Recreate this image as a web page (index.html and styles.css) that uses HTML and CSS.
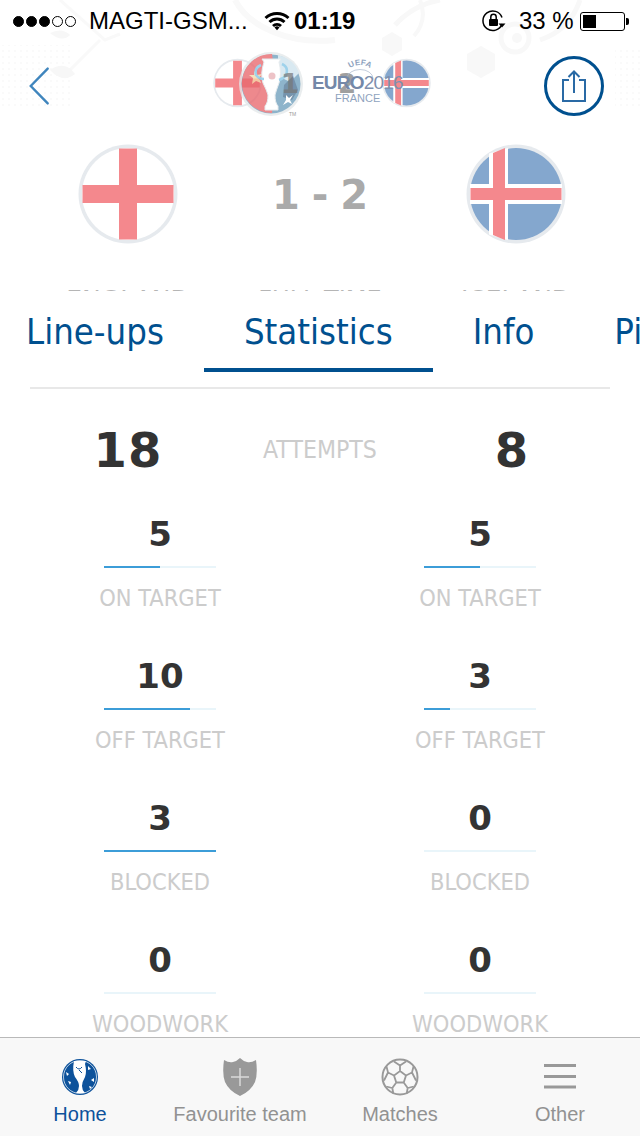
FILE: index.html
```html
<!DOCTYPE html>
<html lang="en">
<head>
<meta charset="utf-8">
<title>England - Iceland statistics</title>
<link rel="stylesheet" href="styles.css">
</head>
<body>
<div class="app">
  <svg class="backdrop" width="640" height="135" viewBox="0 0 640 135" aria-hidden="true">
    <defs><pattern id="dots" width="6" height="6" patternUnits="userSpaceOnUse"><circle cx="3" cy="3" r="1.1" fill="#f9f9f9"/></pattern></defs>
    <rect x="0" y="45" width="70" height="65" fill="url(#dots)"/>
    <rect x="615" y="50" width="25" height="60" fill="url(#dots)"/>
    <path d="M235 0a90 60 0 0 0 100 40" fill="none" stroke="#f9f9f9" stroke-width="6"/>
    <path d="M420 0q8 20 -6 36" fill="none" stroke="#f8f8f8" stroke-width="4"/>
    <path d="M60 0l45 40 15 -6M100 40l-30 30" fill="none" stroke="#f9f9f9" stroke-width="3"/>
    <path d="M50 33q12 -6 20 2q-8 8 -20 -2zM50 70q15 -10 25 4q-12 10 -25 -4z" fill="#f7f7f7"/>
    <path d="M392 32l10 6v12l-10 6l-10 -6v-12zM481 46l14 8v16l-14 8l-14 -8v-16z" fill="#f8f8f8"/>
    <circle cx="515" cy="38" r="14" fill="none" stroke="#f8f8f8" stroke-width="5"/>
    <circle cx="517" cy="38" r="5" fill="#f8f8f8"/>
    <path d="M440 0a80 80 0 0 0 -45 25M580 0q-10 30 -40 40" fill="none" stroke="#f8f8f8" stroke-width="5"/>
  </svg>

  <div class="status">
    <span class="signal"><i class="dot"></i><i class="dot"></i><i class="dot"></i><i class="dot off"></i><i class="dot off"></i></span>
    <span class="carrier">MAGTI-GSM...</span>
    <svg class="wifi" width="26" height="20" viewBox="0 0 26 20"><path d="M1.500 7a17 17 0 0 1 23 0M5.500 11a11 11 0 0 1 15 0M9 15a6 6 0 0 1 8 0" fill="none" stroke="#000" stroke-width="3"/><path d="M10.500 16.500l2.500 2.800l2.500-2.800a3.600 3.600 0 0 0-5 0z"/></svg>
    <span class="clock">01:19</span>
    <svg class="lock" width="24" height="24" viewBox="0 0 24 24"><path d="M20 15a9.800 9.800 0 1 1 0-6.500" fill="none" stroke="#000" stroke-width="1.500"/><path d="M16.500 14.500h7l-3.500 4z"/><rect x="7" y="10" width="9" height="7" rx="1"/><path d="M8.800 10V8a2.700 2.700 0 0 1 5.400 0v2" fill="none" stroke="#000" stroke-width="1.500"/></svg>
    <span class="percent">33 %</span>
    <span class="battery"><span class="battery-fill"></span></span>
    <span class="battery-tip"></span>
  </div>

  <header class="topbar">
    <svg class="back" width="22" height="40" viewBox="0 0 24 42"><path d="M21.500 2L3 21l18.500 19" fill="none" stroke="#3f85bd" stroke-width="2.600" stroke-linecap="round"/></svg>
    <div class="crest">
      <svg class="crest-flag crest-flag-en" width="49" height="50" viewBox="0 0 100 100"><use href="#flag-en"/></svg>
      <svg class="trophy" width="66" height="68" viewBox="0 0 66 68">
        <circle cx="33" cy="33" r="32" fill="#e4e8ea"/>
        <circle cx="33" cy="33" r="29.500" fill="#6f9fbd"/>
        <path d="M4 30a29.500 29.500 0 0 1 30-27l4 27l-4 32a29.500 29.500 0 0 1-30-32z" fill="#e8686e"/>
        <path d="M40 4q16 4 21 18l-9 9l-12-6z" fill="#cfe3ee"/>
        <path d="M46 34l9-9l5 14l-6 10l-9-3z" fill="#4f7696"/>
        <path d="M16 20l3 4l5-1l-3 4l2 5l-5-2l-4 3l1-6l-4-3h5z" fill="#f4d9a8"/>
        <path d="M24 8h19l-2 3q3 12 0 21q-3 8-4 12q0 8 3 11v4H27v-4q3-3 3-11q-1-4-5-12q-3-9 1-21z" fill="#fff" stroke="#dfe6ea"/>
        <path d="M23 14q-7 3-5 10q3 4 8 4M44 13q7 3 4 11q-3 4-7 5" fill="none" stroke="#83c6e6" stroke-width="2.500"/>
        <circle cx="34" cy="25" r="3.500" fill="#e9b3b8"/>
        <path d="M48 44l3 3l4-3l-3 5l2 4l-4-2l-5 3l3-5z" fill="#fff"/>
      </svg>
      <svg class="crest-flag crest-flag-is" width="49" height="50" viewBox="0 0 100 100"><use href="#flag-is"/></svg>
      <span class="crest-tm">TM</span>
      <span class="crest-num crest-num-home">1</span>
      <span class="crest-num crest-num-away">2</span>
      <svg class="uefa-arc" width="36" height="16" viewBox="0 0 36 16"><path id="uefa-curve" d="M3 15a15 13 0 0 1 30 0" fill="none"/><path d="M5 15.500a13 9 0 0 1 26 0" fill="none" stroke="#a9b8cd" stroke-width=".7"/><text class="uefa-text"><textPath href="#uefa-curve" startOffset="50%" text-anchor="middle">UEFA</textPath></text></svg>
      <div class="euro"><b>EURO</b>2016</div>
      <div class="france">FRANCE</div>
    </div>
    <button class="share" type="button" aria-label="Share">
      <svg width="26" height="34" viewBox="0 0 26 34"><path d="M8 11H2v21h22V11h-6M13 24V3M7.500 8L13 2.500L18.500 8" fill="none" stroke="#2a6aa5" stroke-width="2"/></svg>
    </button>
  </header>

  <section class="match">
    <div class="team">
      <svg class="flag" width="100" height="100" viewBox="0 0 100 100"><use href="#flag-en"/></svg>
      <span class="caption">ENGLAND</span>
    </div>
    <div class="result">
      <span class="score">1 - 2</span>
      <span class="caption">FULL TIME</span>
    </div>
    <div class="team team-away">
      <svg class="flag" width="100" height="100" viewBox="0 0 100 100"><use href="#flag-is"/></svg>
      <span class="caption">ICELAND</span>
    </div>
  </section>

  <nav class="tabs">
    <a class="tab">Line-ups</a>
    <a class="tab is-active">Statistics</a>
    <a class="tab">Info</a>
    <a class="tab">Pitch</a>
  </nav>
  <div class="rule"></div>

  <main class="stats">
    <div class="headline">
      <span class="big">18</span>
      <span class="label">ATTEMPTS</span>
      <span class="big">8</span>
    </div>
    <div class="grid">
      <div class="stat"><span class="num">5</span><div class="bar"><div class="fill" style="width:50%"></div></div><span class="label">ON TARGET</span></div>
      <div class="stat"><span class="num">5</span><div class="bar"><div class="fill" style="width:50%"></div></div><span class="label">ON TARGET</span></div>
      <div class="stat"><span class="num">10</span><div class="bar"><div class="fill" style="width:77%"></div></div><span class="label">OFF TARGET</span></div>
      <div class="stat"><span class="num">3</span><div class="bar"><div class="fill" style="width:23%"></div></div><span class="label">OFF TARGET</span></div>
      <div class="stat"><span class="num">3</span><div class="bar"><div class="fill" style="width:100%"></div></div><span class="label">BLOCKED</span></div>
      <div class="stat"><span class="num">0</span><div class="bar"></div><span class="label">BLOCKED</span></div>
      <div class="stat"><span class="num">0</span><div class="bar"></div><span class="label">WOODWORK</span></div>
      <div class="stat"><span class="num">0</span><div class="bar"></div><span class="label">WOODWORK</span></div>
    </div>
  </main>

  <footer class="tabbar">
    <a class="item is-current">
      <svg width="38" height="38" viewBox="0 0 38 38">
        <circle cx="19" cy="19" r="18" fill="#0d529b"/>
        <circle cx="19" cy="19" r="16.500" fill="none" stroke="#fff" stroke-width=".7"/>
        <path d="M13 3h12l-1 3q2 8 0 13q-3 5-3 9q0 4 3 7H15q3-3 3-7q0-4-4-9q-3-6-1-16z" fill="#fff"/>
        <path d="M15 9q3 4 6 0M21 15l-3-3" fill="none" stroke="#0d529b"/>
        <path d="M5 14l3 2l-2 2zM7 23l3 1l-1 3zM30 22l3-2v4zM28 28l3 1l-2 2zM27 8l3 3l-3 1z" fill="#fff"/>
      </svg>
      <span>Home</span>
    </a>
    <a class="item">
      <svg width="34" height="38" viewBox="0 0 34 38">
        <path d="M1 2q5 3 9 2q4-1 7-4q3 3 7 4q4 1 9-2q2 14-1 22q-4 9-15 14q-11-5-15-14q-3-8-1-22z" fill="#999"/>
        <path d="M17 10v18M8 19h18" stroke="#d9d9d9" stroke-width="1.500"/>
      </svg>
      <span>Favourite team</span>
    </a>
    <a class="item">
      <svg width="38" height="38" viewBox="0 0 38 38" fill="none" stroke="#999" stroke-width="1.800">
        <circle cx="19" cy="19" r="17.500" stroke-width="2"/>
        <path d="M19 13l6 4.500l-2.300 7h-7.400l-2.300-7zM19 13V7.500l-6-4M19 7.500l6-4M25 17.500l6-3l1.500-6M31 14.500l4 8M22.700 24.500l4 5.500l6-1.500M26.700 30l-1 5.500M15.300 24.500l-4 5.500l-6-1.500M11.300 30l1 5.500M13 17.500l-6-3l-1.500-6M7 14.500l-4 8"/>
      </svg>
      <span>Matches</span>
    </a>
    <a class="item">
      <svg width="34" height="38" viewBox="0 0 34 38"><path d="M1 7.500h32M1 18.500h32M1 29h32" stroke="#999" stroke-width="3"/></svg>
      <span>Other</span>
    </a>
  </footer>

  <svg class="defs" width="0" height="0" aria-hidden="true">
    <defs>
      <g id="flag-en">
        <circle cx="50" cy="50" r="49.500" fill="#e6eaee"/>
        <circle cx="50" cy="50" r="46" fill="#fff"/>
        <path d="M41 4.500h18V41h36.500v18H59v36.500H41V59H4.500V41H41z" fill="#f4888d"/>
      </g>
      <g id="flag-is">
        <circle cx="50" cy="50" r="49.500" fill="#e6eaee"/>
        <circle cx="50" cy="50" r="46" fill="#84a7ce"/>
        <path d="M23 9.500L42 4v92l-19-5.500zM4 40h92v20H4z" fill="#fff"/>
        <path d="M27 9l12-5v92l-12-5zM4.500 44h91v12h-91z" fill="#f4888d"/>
      </g>
    </defs>
  </svg>
</div>
</body>
</html>
```
FILE: styles.css
```css
* { box-sizing: border-box; }
html, body { margin: 0; padding: 0; background: #fff; }
body { font-family: "Liberation Sans", Arial, sans-serif; }
.app { position: relative; width: 640px; height: 1136px; overflow: hidden; display: flex; flex-direction: column; background: #fff; }
.backdrop { position: absolute; left: 0; top: 0; }
.defs { position: absolute; }

.status { position: relative; display: flex; align-items: center; height: 42px; padding-left: 13px; color: #000; font-size: 24px; }
.signal { display: flex; gap: 2px; width: 68px; }
.dot { width: 11px; height: 11px; border-radius: 50%; background: #000; border: 1px solid #000; }
.dot.off { background: transparent; }
.carrier { margin-left: 8px; width: 175px; white-space: nowrap; }
.wifi { margin-right: 4px; }
.clock { font-weight: 700; font-size: 24px; width: 189px; }
.lock { margin-left: -1px; }
.percent { margin-left: 13px; width: 61px; white-space: nowrap; }
.battery { width: 45px; height: 19px; border: 1px solid #000; border-radius: 3px; padding: 2px; }
.battery-fill { display: block; width: 13px; height: 100%; background: #000; }
.battery-tip { width: 3px; height: 7px; background: #000; border-radius: 0 2px 2px 0; margin-left: 1px; }

.topbar { position: relative; height: 88px; display: flex; align-items: center; justify-content: space-between; padding: 0 36px 0 28px; }
.back { display: block; }
.crest { position: absolute; left: 213px; top: 9px; width: 220px; height: 68px; }
.crest-flag { position: absolute; top: 7px; }
.crest-flag-en { left: 0; }
.crest-flag-is { left: 169px; }
.trophy { position: absolute; left: 25px; top: 0; opacity: .78; }
.crest-tm { position: absolute; left: 76px; top: 60px; font-size: 5px; color: #999; }
.crest-num { position: absolute; top: 18px; font: 700 26px/30px "DejaVu Sans", sans-serif; color: #777; opacity: .7; }
.crest-num-home { left: 68px; }
.crest-num-away { left: 125px; }
.uefa-arc { position: absolute; left: 129px; top: 12px; overflow: visible; }
.uefa-text { font: 700 8px "Liberation Sans", sans-serif; fill: #8fa3be; }
.euro { position: absolute; left: 99px; top: 20px; font-size: 19px; color: #7f90ad; white-space: nowrap; letter-spacing: -.8px; line-height: 24px; }
.euro b { color: #7488a8; }
.france { position: absolute; left: 122px; top: 40px; font-size: 11px; color: #8fa3be; line-height: 14px; }
.share { width: 60px; height: 60px; border-radius: 50%; border: 3px solid #00508f; background: #fff; padding: 0; display: flex; align-items: center; justify-content: center; }

.match { height: 161px; display: grid; grid-template-columns: 256px 128px 256px; overflow: hidden; padding-top: 14px; }
.team, .result { display: flex; flex-direction: column; align-items: center; }
.flag { display: block; flex: none; }
.team-away { padding-left: 8px; }
.team .caption { margin-top: 41px; }
.result .caption { margin-top: 53px; font-size: 24px; }
.caption { font: 400 25px/30px "DejaVu Sans", sans-serif; color: #b5b5b5; white-space: nowrap; }
.score { margin-top: 15px; font: 700 40px/73px "DejaVu Sans", sans-serif; word-spacing: -2px; color: #aaa; white-space: nowrap; }

.tabs { display: flex; margin-left: -14px; height: 81px; white-space: nowrap; }
.tab { flex: none; padding: 0 40px; height: 81px; font: 400 36.2px/82px "DejaVu Sans Condensed", "DejaVu Sans", sans-serif; font-stretch: condensed; color: #00508f; }
.tab.is-active { border-bottom: 4px solid #00508f; }
.rule { height: 2px; margin: 15px 30px 0; background: #e8e8e8; flex: none; }

.stats { flex: 1; min-height: 0; overflow: hidden; }
.headline { display: grid; grid-template-columns: 256px 128px 256px; height: 120px; align-items: start; justify-items: center; padding-top: 31px; }
.headline .label { margin-top: 15px; font-size: 24.6px; }
.big { font: 700 48px/60px "DejaVu Sans", sans-serif; color: #333; letter-spacing: 1px; }
.label { font: 400 23.4px/30px "DejaVu Sans Condensed", "DejaVu Sans", sans-serif; font-stretch: condensed; color: #ccc; white-space: nowrap; }
.grid { display: grid; grid-template-columns: 320px 320px; grid-auto-rows: 142px; }
.stat { display: flex; flex-direction: column; align-items: center; }
.num { font: 700 34px/46px "DejaVu Sans", sans-serif; color: #333; height: 55px; margin-top: 2px; }
.bar { width: 112px; height: 2px; background: #e9f5fa; flex: none; }
.fill { height: 100%; background: #3c9dd8; }
.stat .label { margin-top: 15px; }

.tabbar { flex: none; height: 99px; display: grid; grid-template-columns: repeat(4, 160px); background: #f8f8f8; border-top: 1px solid #b9b9b9; }
.item { display: flex; flex-direction: column; align-items: center; font-size: 20px; color: #929292; padding-top: 20px; }
.item svg { display: block; height: 38px; margin-bottom: 6px; }
.item span { line-height: 24px; }
.item.is-current { color: #0d529b; }
```
